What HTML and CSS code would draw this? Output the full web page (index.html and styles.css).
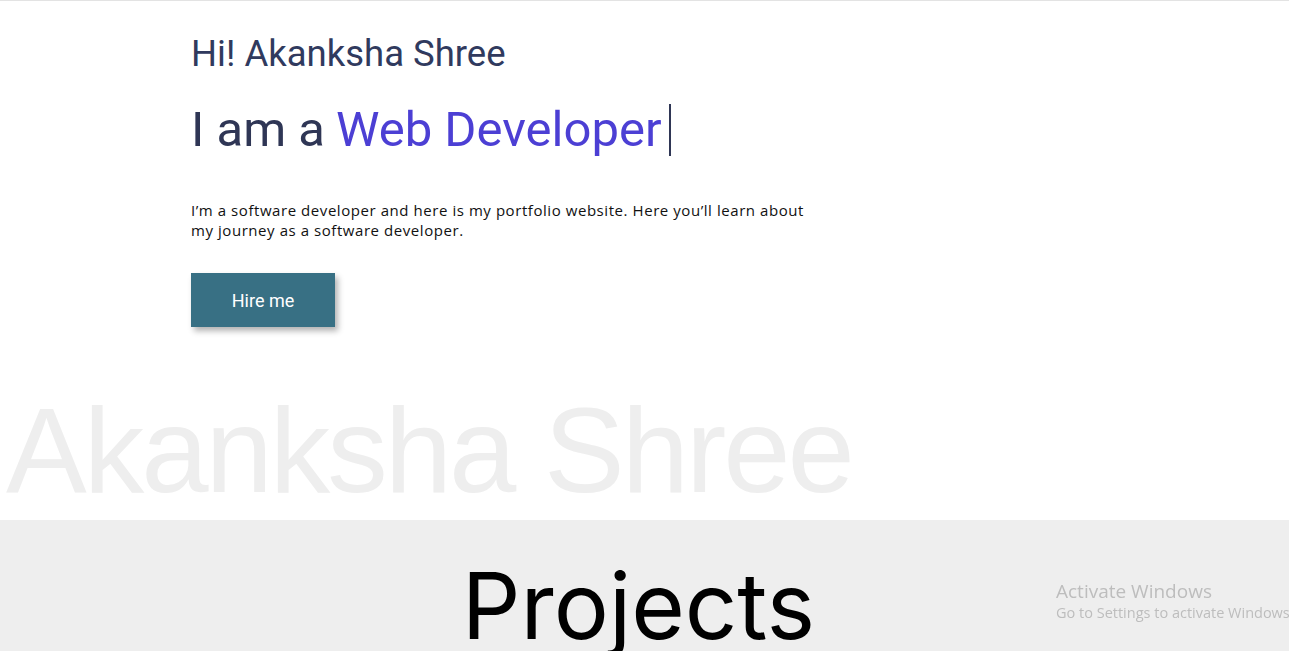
FILE: index.html
```html
<!DOCTYPE html>
<html>
<head>
<meta charset="utf-8">
<link rel="stylesheet" href="styles.css">
</head>
<body>
<div class="topline"></div>
<section class="hero">
  <div class="intro">
    <h1 class="greet">Hi! Akanksha Shree</h1>
    <h2 class="role">I am a <span class="accent">Web Developer</span><span class="cursor"></span></h2>
    <p class="about">I’m a software developer and here is my portfolio website. Here you’ll learn about my journey as a software developer.</p>
    <button class="hire">Hire me</button>
  </div>
  <div class="watermark">Akanksha Shree</div>
</section>
<section class="projects">
  <h2 class="projects-title">Projects</h2>
</section>
<div class="activate">
  <div class="act-title">Activate Windows</div>
  <div class="act-sub">Go to Settings to activate Windows.</div>
</div>
</body>
</html>
```
FILE: styles.css
```css
html, body {
  margin: 0;
  padding: 0;
  background: #ffffff;
  overflow: hidden;
  height: 651px;
}
body {
  font-family: Roboto, "Liberation Sans", sans-serif;
  color: #2f3655;
}
.topline {
  height: 1px;
  background: #e3e3e3;
}
.hero {
  display: flex;
  flex-direction: column;
  height: 519px;
}
.intro {
  padding: 29px 0 0 191px;
  display: flex;
  flex-direction: column;
  align-items: flex-start;
}
.greet {
  margin: 0;
  font-weight: 400;
  font-size: 36.5px;
  line-height: 48px;
  color: #303a5e;
}
.role {
  margin: 24px 0 0;
  font-weight: 400;
  font-size: 49px;
  line-height: 56px;
  color: #2f3655;
  display: flex;
  align-items: center;
}
.accent {
  color: #4c3fd4;
  margin-left: 11px;
}
.cursor {
  display: inline-block;
  width: 2px;
  height: 52px;
  background: #2f3655;
  margin-left: 7px;
}
.about {
  margin: 42px 0 0;
  width: 622px;
  font-family: "Open Sans", Roboto, sans-serif;
  font-size: 15px;
  letter-spacing: 0.56px;
  line-height: 20px;
  color: #111;
}
.hire {
  margin-top: 33px;
  width: 144px;
  height: 54px;
  border: none;
  background: #387084;
  color: #fff;
  font-family: Roboto, "Liberation Sans", sans-serif;
  font-size: 18px;
  box-shadow: 3px 4px 6px rgba(0,0,0,0.3);
  cursor: pointer;
}
.watermark {
  margin-top: auto;
  padding-left: 6px;
  margin-bottom: 10px;
  font-family: "Liberation Sans", Arial, sans-serif;
  font-size: 121px;
  letter-spacing: -3px;
  line-height: 120px;
  color: #eeeeee;
  white-space: nowrap;
}
.projects {
  background: #eeeeee;
  height: 131px;
  overflow: hidden;
  display: flex;
  justify-content: center;
}
.projects-title {
  margin: 31px 0 0 -12px;
  font-family: Inter, "Liberation Sans", sans-serif;
  font-weight: 400;
  font-size: 92px;
  line-height: 110px;
  color: #000;
}
.activate {
  position: fixed;
  left: 1056px;
  top: 579px;
  font-family: "Open Sans", "Liberation Sans", sans-serif;
  color: #bdbdbd;
  white-space: nowrap;
}
.act-title {
  font-size: 19px;
  line-height: 24px;
}
.act-sub {
  font-size: 14.5px;
  line-height: 20px;
}
```
